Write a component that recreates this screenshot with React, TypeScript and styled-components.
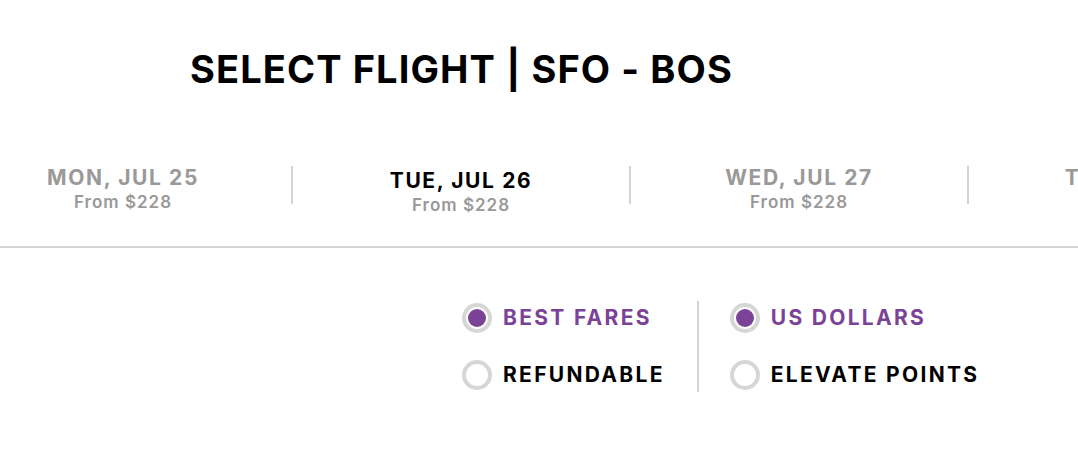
import React from "react";
import styled, { createGlobalStyle } from "styled-components";

const GlobalStyle = createGlobalStyle`
  html, body {
    margin: 0;
    padding: 0;
    background: #ffffff;
    overflow: hidden;
  }
  body {
    font-family: Inter, "Liberation Sans", Arial, sans-serif;
    color: #000;
  }
`;

const Page = styled.div`
  width: 1078px;
  height: 452px;
  overflow: hidden;
`;

const Title = styled.h1`
  margin: 0;
  padding: 50px 0 0 190px;
  font-size: 38px;
  line-height: 38px;
  font-weight: 700;
  letter-spacing: 1.1px;
  color: #000;
  white-space: nowrap;
`;

const DateBar = styled.div`
  margin-top: 78px;
  height: 80px;
  border-bottom: 2px solid #d4d4d4;
  display: flex;
  align-items: flex-start;
  margin-left: -45px;
  width: 1400px;
`;

const DateTab = styled.div<{ $active?: boolean }>`
  width: 336px;
  flex: none;
  display: flex;
  flex-direction: column;
  align-items: center;
  padding-top: ${({ $active }) => ($active ? "4px" : "1px")};
  cursor: pointer;
`;

const TabSeparator = styled.div`
  width: 2px;
  height: 38px;
  flex: none;
  background: #d4d4d4;
`;

const DateLabel = styled.div<{ $active?: boolean }>`
  font-size: 21px;
  line-height: 22px;
  font-weight: 700;
  letter-spacing: 1.6px;
  color: ${({ $active }) => ($active ? "#000" : "#999999")};
  white-space: nowrap;
`;

const Price = styled.div`
  margin-top: 3px;
  font-size: 17px;
  line-height: 20px;
  font-weight: 600;
  letter-spacing: 1px;
  color: #999999;
  white-space: nowrap;
`;

const Options = styled.div`
  margin-top: 53px;
  padding-left: 462px;
  display: flex;
  align-items: stretch;
`;

const OptionGroup = styled.div`
  display: flex;
  flex-direction: column;
  gap: 27px;
  padding: 2px 0;
`;

const GroupDivider = styled.div`
  width: 2px;
  background: #d4d4d4;
  margin: 0 31px 0 32px;
`;

const Option = styled.label`
  display: flex;
  align-items: center;
  gap: 11px;
  cursor: pointer;
`;

const Radio = styled.span<{ $checked?: boolean }>`
  width: 30px;
  height: 30px;
  box-sizing: border-box;
  border: 4px solid #d6d6d6;
  border-radius: 50%;
  display: flex;
  align-items: center;
  justify-content: center;
  flex: none;

  &::after {
    content: "";
    width: 18px;
    height: 18px;
    border-radius: 50%;
    background: ${({ $checked }) => ($checked ? "#7b4397" : "transparent")};
  }
`;

const OptionText = styled.span<{ $checked?: boolean }>`
  font-size: 21px;
  line-height: 24px;
  font-weight: 700;
  letter-spacing: 2.3px;
  color: ${({ $checked }) => ($checked ? "#7b4397" : "#000")};
  white-space: nowrap;
`;

const dates = [
  { label: "MON, JUL 25", price: "From $228" },
  { label: "TUE, JUL 26", price: "From $228", active: true },
  { label: "WED, JUL 27", price: "From $228" },
  { label: "THU, JUL 28", price: "From $228" },
];

const fareOptions = [
  { label: "BEST FARES", checked: true },
  { label: "REFUNDABLE" },
];

const currencyOptions = [
  { label: "US DOLLARS", checked: true },
  { label: "ELEVATE POINTS" },
];

function RadioOption({ label, checked }: { label: string; checked?: boolean }) {
  return (
    <Option>
      <Radio $checked={checked} />
      <OptionText $checked={checked}>{label}</OptionText>
    </Option>
  );
}

export default function App() {
  return (
    <Page>
      <GlobalStyle />
      <Title>SELECT FLIGHT | SFO - BOS</Title>
      <DateBar>
        {dates.map((d, i) => (
          <React.Fragment key={d.label}>
            {i > 0 && <TabSeparator />}
            <DateTab $active={d.active}>
              <DateLabel $active={d.active}>{d.label}</DateLabel>
              <Price>{d.price}</Price>
            </DateTab>
          </React.Fragment>
        ))}
      </DateBar>
      <Options>
        <OptionGroup>
          {fareOptions.map((o) => (
            <RadioOption key={o.label} {...o} />
          ))}
        </OptionGroup>
        <GroupDivider />
        <OptionGroup>
          {currencyOptions.map((o) => (
            <RadioOption key={o.label} {...o} />
          ))}
        </OptionGroup>
      </Options>
    </Page>
  );
}
